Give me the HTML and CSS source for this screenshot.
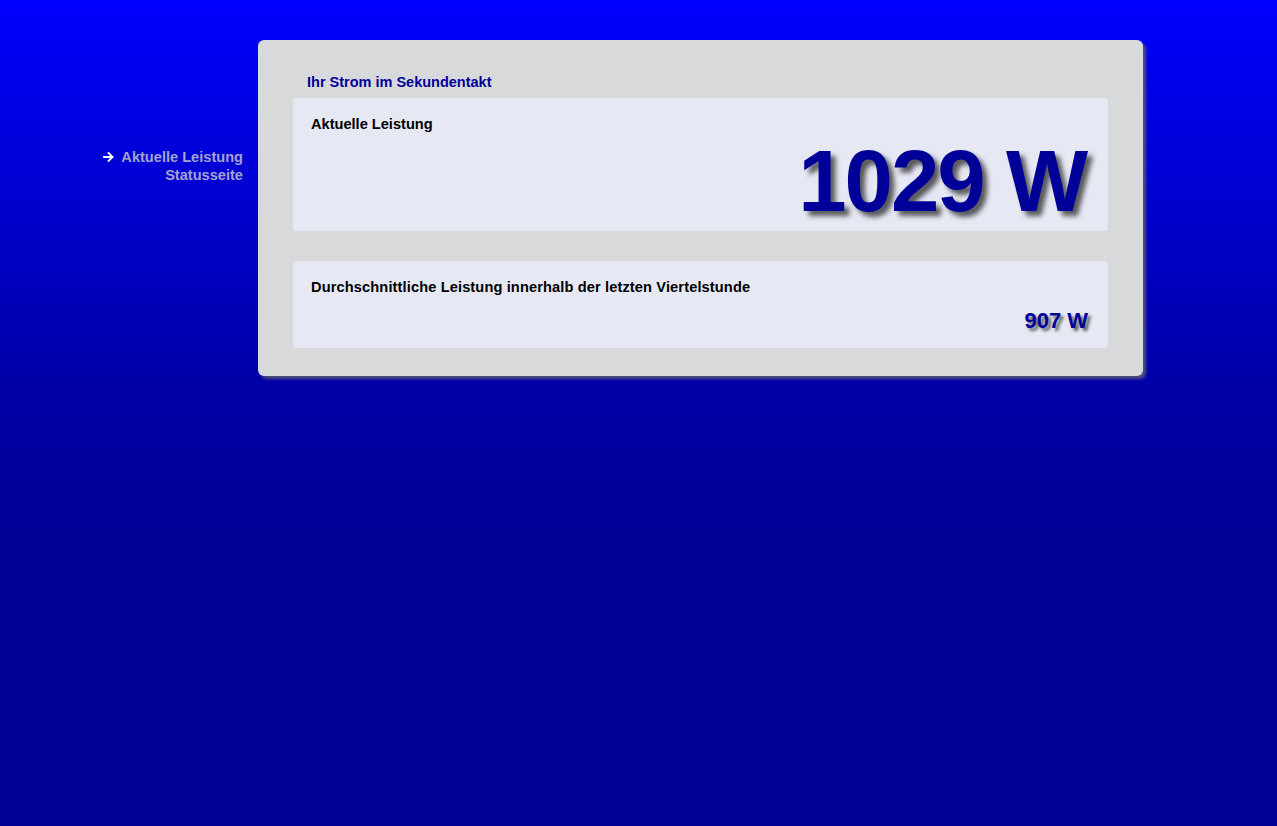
FILE: index.html
```html
<!DOCTYPE html>
<html lang="de">
<head>
<meta charset="utf-8">
<title>Ihr Strom im Sekundentakt</title>
<link rel="stylesheet" href="styles.css">
</head>
<body>
<div class="page">
  <nav class="side">
    <a class="nav-item active" href="#"><svg class="arrow" width="11" height="10" viewBox="0 0 11 10"><path d="M1 5H9.5M5.5 1L9.5 5L5.5 9" fill="none" stroke="#ffffff" stroke-width="1.8" stroke-linecap="square"/></svg>Aktuelle Leistung</a>
    <a class="nav-item" href="#">Statusseite</a>
  </nav>
  <main class="panel">
    <h1 class="title">Ihr Strom im Sekundentakt</h1>
    <section class="box box-main">
      <h2 class="label">Aktuelle Leistung</h2>
      <div class="value big">1029 W</div>
    </section>
    <section class="box box-avg">
      <h2 class="label wide">Durchschnittliche Leistung innerhalb der letzten Viertelstunde</h2>
      <div class="value small">907 W</div>
    </section>
  </main>
</div>
</body>
</html>
```
FILE: styles.css
```css
html, body {
  margin: 0;
  padding: 0;
  height: 100%;
}
body {
  background: #000094 linear-gradient(to bottom, #0000ff 0px, #0000e0 120px, #0000a8 380px, #000094 540px) no-repeat;
  background-size: 100% 540px;
  font-family: "Liberation Sans", Arial, sans-serif;
  min-height: 826px;
}
.page {
  display: flex;
  align-items: flex-start;
  padding-top: 40px;
}
.side {
  width: 243px;
  display: flex;
  flex-direction: column;
  align-items: flex-end;
  padding-top: 108px;
  box-sizing: border-box;
}
.nav-item {
  font-size: 14.6px;
  font-weight: bold;
  color: #a3a3cf;
  text-decoration: none;
  line-height: 18px;
  display: flex;
  align-items: center;
}
.arrow {
  display: block;
  margin-right: 7px;
  margin-left: 0;
}
.panel {
  margin-left: 15px;
  width: 885px;
  height: 336px;
  box-sizing: border-box;
  background: #d8d9db;
  border-radius: 6px;
  box-shadow: 3px 3px 3px rgba(90, 90, 120, 0.85);
  padding: 34px 35px 0 35px;
}
.title {
  margin: 0 0 7px 14px;
  font-size: 14.5px;
  line-height: 17px;
  font-weight: bold;
  color: #000099;
}
.box {
  background: #e6e8f3;
  border-radius: 4px;
  padding: 18px 20px 0 18px;
  box-sizing: border-box;
}
.box-main {
  height: 133px;
  margin-bottom: 30px;
}
.box-avg {
  height: 87px;
}
.label {
  margin: 0;
  font-size: 14.6px;
  line-height: 17px;
  font-weight: bold;
  color: #000000;
}
.label.wide {
  letter-spacing: 0.13px;
}
.value {
  text-align: right;
  font-weight: bold;
  color: #000099;
}
.big {
  font-size: 87px;
  line-height: 80px;
  margin-top: 8px;
  letter-spacing: -2px;
  padding-right: 2px;
  text-shadow: 5px 5px 5px rgba(40, 40, 40, 0.75);
}
.small {
  font-size: 22px;
  line-height: 24px;
  margin-top: 13px;
  text-shadow: 3px 3px 3px rgba(40, 40, 40, 0.7);
}
```
